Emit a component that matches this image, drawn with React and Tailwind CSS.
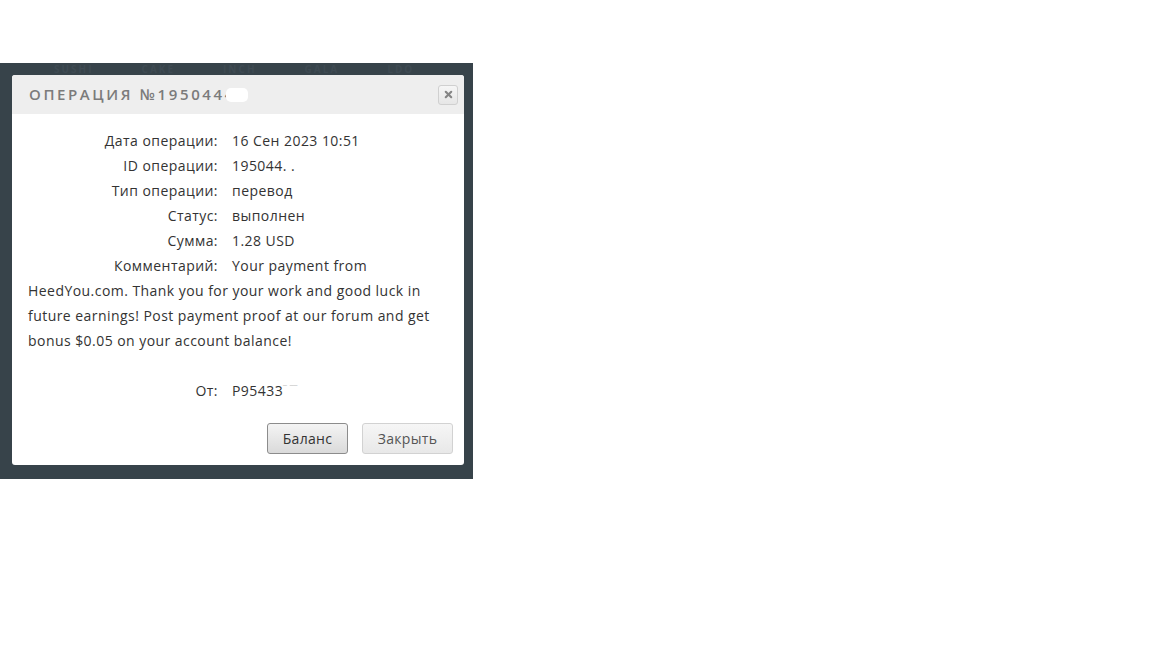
import React from "react";
import { X } from "lucide-react";

const rows = [
  ["Дата операции:", "16 Сен 2023 10:51"],
  ["ID операции:", "195044. ."],
  ["Тип операции:", "перевод"],
  ["Статус:", "выполнен"],
  ["Сумма:", "1.28 USD"],
];

const Row = ({ label, children }) => (
  <div className="h-[25px] leading-[25px]">
    <span className="float-left w-[190px] text-right mr-[14px] text-[#333]">{label}</span>
    <span>{children}</span>
  </div>
);

export default function App() {
  return (
    <div className="w-[1152px] h-[648px] bg-white font-['Open_Sans',sans-serif]">
      <div className="pt-[63px]">
        <div className="w-[473px] h-[416px] bg-[#37434a] px-[9px] pt-[1px]">
          {/* page content peeking above the modal */}
          <div className="h-[11px] flex gap-[48px] pl-[45px] text-[10px] leading-[10px] font-bold tracking-[2px] text-[#3e4a52]">
            <span>SUSHI</span>
            <span>CAKE</span>
            <span>INCH</span>
            <span>GALA</span>
            <span>LDO</span>
          </div>

          <div className="ml-[3px] w-[452px] h-[390px] bg-white rounded-[3px] flex flex-col">
            <div className="h-[39px] bg-[#eeeeee] rounded-t-[3px] flex items-center justify-between pl-[17px] pr-[6px]">
              <div className="flex items-center text-[15px] font-semibold tracking-[2.6px] text-[#7b7b7b]">
                <span>ОПЕРАЦИЯ №1950444</span>
                <span className="w-[22px] h-[14px] -ml-[10px] bg-white rounded-[5px]" />
              </div>
              <button className="w-[20px] h-[20px] rounded-[3px] border border-[#d0d0d0] bg-gradient-to-b from-[#f6f6f6] to-[#e6e6e6] flex items-center justify-center">
                <X size={11} strokeWidth={4.5} className="text-[#858585]" />
              </button>
            </div>

            <div className="px-[16px] pt-[14px] text-[14px] text-[#333] tracking-[0.45px]">
              {rows.map(([l, v]) => (
                <Row key={l} label={l}>{v}</Row>
              ))}
              <div className="leading-[25px]">
                <span className="float-left w-[190px] text-right mr-[14px]">Комментарий:</span>
                Your payment from<br />
                HeedYou.com. Thank you for your work and good luck in<br />
                future earnings! Post payment proof at our forum and get<br />
                bonus $0.05 on your account balance!
              </div>
              <div className="h-[25px]" />
              <Row label="От:">
                P95433<span className="text-[#c8c8c8] text-[10px] align-top">‾ ‾‾</span>
              </Row>
            </div>

            <div className="mt-auto flex justify-end gap-[14px] pr-[11px] pb-[11px] text-[14px] tracking-[0.3px]">
              <button className="w-[81px] h-[31px] rounded-[3px] border border-[#8c8c8c] bg-gradient-to-b from-[#f4f4f4] to-[#dadada] text-[#333]">
                Баланс
              </button>
              <button className="w-[91px] h-[31px] rounded-[3px] border border-[#d2d2d2] bg-gradient-to-b from-[#f6f6f6] to-[#e8e8e8] text-[#555]">
                Закрыть
              </button>
            </div>
          </div>
        </div>
      </div>
    </div>
  );
}
